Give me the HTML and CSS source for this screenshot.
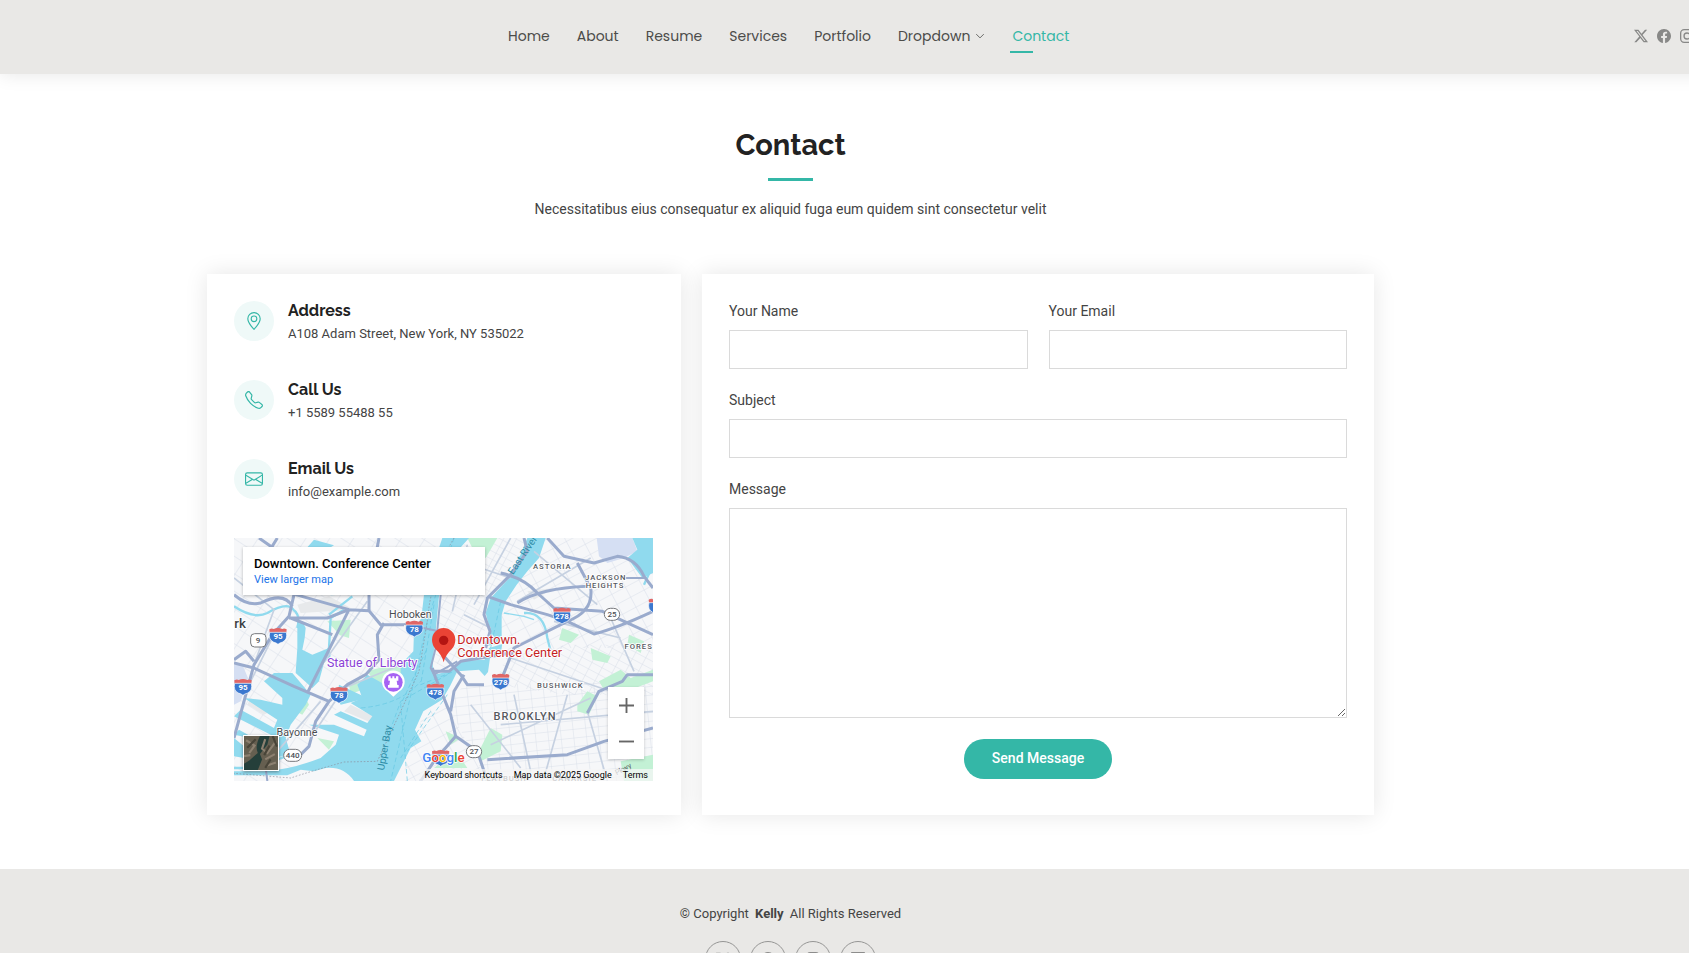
FILE: index.html
```html
<!DOCTYPE html>
<html lang="en">
<head>
<meta charset="utf-8">
<title>Contact - Kelly</title>
<link rel="stylesheet" href="styles.css">
</head>
<body>
<svg class="sprite" aria-hidden="true">
  <symbol id="x" viewBox="0 0 16 16"><path d="M12.6.75h2.454l-5.36 6.142L16 15.25h-4.937l-3.867-5.07-4.425 5.07H.316l5.733-6.57L0 .75h5.063l3.495 4.633L12.601.75Zm-.86 13.028h1.36L4.323 2.145H2.865z"/></symbol>
  <symbol id="facebook" viewBox="0 0 16 16"><path d="M16 8.049c0-4.446-3.582-8.05-8-8.05C3.58 0-.002 3.603-.002 8.05c0 4.017 2.926 7.347 6.75 7.951v-5.625h-2.03V8.05H6.75V6.275c0-2.017 1.195-3.131 3.022-3.131.876 0 1.791.157 1.791.157v1.98h-1.009c-.993 0-1.303.621-1.303 1.258v1.51h2.218l-.354 2.326H9.25V16c3.824-.604 6.75-3.934 6.75-7.951"/></symbol>
  <symbol id="instagram" viewBox="0 0 16 16"><rect x=".75" y=".75" width="14.5" height="14.5" rx="4" fill="none" stroke="currentColor" stroke-width="1.5"/><circle cx="8" cy="8" r="3.4" fill="none" stroke="currentColor" stroke-width="1.5"/><circle cx="12.3" cy="3.7" r="1"/></symbol>
  <symbol id="linkedin" viewBox="0 0 16 16"><path d="M0 1.146C0 .513.526 0 1.175 0h13.65C15.474 0 16 .513 16 1.146v13.708c0 .633-.526 1.146-1.175 1.146H1.175C.526 16 0 15.487 0 14.854zm4.943 12.248V6.169H2.542v7.225zm-1.2-8.212c.837 0 1.358-.554 1.358-1.248-.015-.709-.52-1.248-1.342-1.248S2.4 3.226 2.4 3.934c0 .694.521 1.248 1.327 1.248zm4.908 8.212V9.359c0-.216.016-.432.08-.586.173-.431.568-.878 1.232-.878.869 0 1.216.662 1.216 1.634v3.865h2.401V9.25c0-2.22-1.184-3.252-2.764-3.252-1.274 0-1.845.7-2.165 1.193v.025h-.016l.016-.025V6.169h-2.4c.03.678 0 7.225 0 7.225z"/></symbol>
</svg>

<header class="header">
  <nav class="nav">
    <a href="#">Home</a>
    <a href="#">About</a>
    <a href="#">Resume</a>
    <a href="#">Services</a>
    <a href="#">Portfolio</a>
    <a href="#">Dropdown <svg class="chevron" viewBox="0 0 16 16"><path d="M2 5l6 6 6-6" fill="none" stroke="currentColor" stroke-width="1.3"/></svg></a>
    <a href="#" class="active">Contact</a>
  </nav>
  <div class="social">
    <a href="#" aria-label="X"><svg><use href="#x"/></svg></a>
    <a href="#" aria-label="Facebook"><svg><use href="#facebook"/></svg></a>
    <a href="#" aria-label="Instagram"><svg><use href="#instagram"/></svg></a>
    <a href="#" aria-label="LinkedIn"><svg><use href="#linkedin"/></svg></a>
  </div>
</header>

<main class="main">
  <div class="title">
    <h1>Contact</h1>
    <p>Necessitatibus eius consequatur ex aliquid fuga eum quidem sint consectetur velit</p>
  </div>

  <div class="columns">
    <section class="card info">
      <div class="item">
        <span class="badge"><svg viewBox="0 0 16 16"><path d="M12.166 8.94c-.524 1.062-1.234 2.12-1.96 3.07A32 32 0 0 1 8 14.58a32 32 0 0 1-2.206-2.57c-.726-.95-1.436-2.008-1.96-3.07C3.304 7.867 3 6.862 3 6a5 5 0 0 1 10 0c0 .862-.305 1.867-.834 2.94M8 16s6-5.686 6-10A6 6 0 0 0 2 6c0 4.314 6 10 6 10"/><path d="M8 8a2 2 0 1 1 0-4 2 2 0 0 1 0 4m0 1a3 3 0 1 0 0-6 3 3 0 0 0 0 6"/></svg></span>
        <div><h2>Address</h2><p>A108 Adam Street, New York, NY 535022</p></div>
      </div>
      <div class="item">
        <span class="badge"><svg viewBox="0 0 16 16"><path d="M3.654 1.328a.678.678 0 0 0-1.015-.063L1.605 2.3c-.483.484-.661 1.169-.45 1.77a17.6 17.6 0 0 0 4.168 6.608 17.6 17.6 0 0 0 6.608 4.168c.601.211 1.286.033 1.77-.45l1.034-1.034a.678.678 0 0 0-.063-1.015l-2.307-1.794a.68.68 0 0 0-.58-.122l-2.19.547a1.75 1.75 0 0 1-1.657-.459L5.482 8.062a1.75 1.75 0 0 1-.46-1.657l.548-2.19a.68.68 0 0 0-.122-.58zM1.884.511a1.745 1.745 0 0 1 2.612.163L6.29 2.98c.329.423.445.974.315 1.494l-.547 2.19a.68.68 0 0 0 .178.643l2.457 2.457a.68.68 0 0 0 .644.178l2.189-.547a1.75 1.75 0 0 1 1.494.315l2.306 1.794c.829.645.905 1.87.163 2.611l-1.034 1.034c-.74.74-1.846 1.065-2.877.702a18.6 18.6 0 0 1-7.01-4.42 18.6 18.6 0 0 1-4.42-7.009c-.362-1.03-.037-2.137.703-2.877z"/></svg></span>
        <div><h2>Call Us</h2><p>+1 5589 55488 55</p></div>
      </div>
      <div class="item">
        <span class="badge"><svg viewBox="0 0 16 16"><path d="M0 4a2 2 0 0 1 2-2h12a2 2 0 0 1 2 2v8a2 2 0 0 1-2 2H2a2 2 0 0 1-2-2zm2-1a1 1 0 0 0-1 1v.217l7 4.2 7-4.2V4a1 1 0 0 0-1-1zm13 2.383-4.708 2.825L15 11.105zm-.034 6.876-5.64-3.471L8 9.583l-1.326-.795-5.64 3.47A1 1 0 0 0 2 13h12a1 1 0 0 0 .966-.741M1 11.105l4.708-2.897L1 5.383z"/></svg></span>
        <div><h2>Email Us</h2><p>info@example.com</p></div>
      </div>

      <div class="map">
        <svg class="canvas" viewBox="0 0 1257 729" preserveAspectRatio="xMidYMid slice">
          <defs>
            <pattern id="g1" width="34" height="22" patternUnits="userSpaceOnUse" patternTransform="rotate(28)"><path d="M0 0H34M0 0V22" class="street"/></pattern>
            <pattern id="g2" width="38" height="26" patternUnits="userSpaceOnUse" patternTransform="rotate(-6)"><path d="M0 0H38M0 0V26" class="street"/></pattern>
            <pattern id="g3" width="46" height="34" patternUnits="userSpaceOnUse" patternTransform="rotate(-28)"><path d="M0 0H46M0 0V34" class="street"/></pattern>
            <pattern id="g4" width="60" height="44" patternUnits="userSpaceOnUse" patternTransform="rotate(33)"><path d="M0 0H60M0 0V44" class="street"/></pattern>
            <g id="shield"><path d="M-26-20Q-18-25-13-21Q0-27 13-21Q18-25 26-20L25-10H-25Z" fill="#e06666"/><path d="M-25-11H25Q30 10 14 18Q4 21 0 25Q-4 21-14 18Q-30 10-25-11Z" fill="#3b78cf" stroke="#fff" stroke-width="2"/></g>
          </defs>
          <rect width="1257" height="729" fill="#f6f7f9"/>
          <path d="M0 0H620L540 400L340 470L150 729H0Z" fill="url(#g4)"/>
          <path d="M700 0H880L760 200L750 300L640 400L600 370L620 160Z" fill="url(#g1)"/>
          <path d="M930 0H1257V330H1000L800 380L770 180Z" fill="url(#g3)"/>
          <path d="M1000 320H1257V470H1000L780 440L820 350Z" fill="url(#g1)"/>
          <path d="M690 440L1257 430V729H760L640 500Z" fill="url(#g2)"/>
          <path d="M570 520L640 500L760 729H500Z" fill="url(#g3)"/>

          <g fill="#c3f1d5">
            <path d="M400 400L490 375L520 400L480 450L420 430Z"/><path d="M280 250L350 245L345 300L318 292Z"/><path d="M700 0H790L755 60L715 30Z"/>
            <path d="M770 570L805 590L800 640L740 670L735 640Z"/><path d="M1030 500L1060 460L1090 475L1065 530L1030 520Z"/><path d="M1095 430L1160 395L1190 420L1257 395V430L1190 455H1110Z"/>
            <path d="M190 490L215 480L225 500L205 530L185 520Z"/><path d="M550 490L590 465L625 475L590 500Z"/><path d="M985 270L1035 290L1010 315L975 305Z"/><path d="M1070 330L1130 355L1120 375L1075 365Z"/><path d="M1185 290L1230 310L1220 345L1180 320Z"/><path d="M345 440L375 425L385 455L350 468Z"/><path d="M250 600L300 610L285 635Z"/><path d="M635 580L680 600L650 620Z"/><path d="M625 670L680 660L700 690H600Z"/><path d="M1160 670L1257 650V729H1170Z"/>
          </g>
          <path d="M1088 0H1195L1210 40L1170 60L1120 75L1095 55Z" fill="#d5dff3"/><path d="M0 380H25L42 420L20 490L0 500Z" fill="#d5dff3"/>
          <path d="M190 200L285 175L360 215L200 225ZM50 480L110 520L90 530L40 500ZM880 160L960 150L900 185ZM350 500L470 560L450 570L330 520Z" fill="#e7e9eb"/>

          <g fill="#90daee">
            <path d="M625 0H705L665 45Q632 110 615 175L603 300L596 380L600 410L645 400L680 368L752 365L765 330L805 318L800 345L768 360L762 402L752 414L735 395L670 400L648 445L624 485L568 520L543 575L562 610L530 630L480 729H360Q330 685 275 690L240 700L200 695L160 712H0V700L90 700Q170 695 260 660L305 620L315 590L225 560L300 560L390 595L398 575L300 530L320 520L400 555L415 535L350 495L385 480L370 440L400 410L480 455L500 450V380L538 340L540 280L562 240L570 170L598 80Z"/>
            <path d="M880 0H935L915 60L880 100L848 140L815 190L803 230L803 295L785 318L755 325L768 275L755 225L770 180L835 110Z"/>
            <path d="M1195 0H1257V105L1225 120L1180 60L1210 35Z"/>
            <path d="M175 405L230 470L215 500L170 560L155 600L170 650L60 670L50 600L0 590L15 575L95 620L110 590L0 535L20 515L120 570L130 545L30 480L80 485L145 500L145 480L90 430L120 405Z"/>
            <path d="M190 260L205 250L215 270L212 300L205 335L235 350L285 330L290 355L270 375L255 430L235 450L185 405L190 330Z"/>
            <path d="M315 440L400 480L320 500L310 480Z"/><path d="M0 600L30 625V660L0 655Z"/><path d="M255 60L320 170L290 172L240 70Z"/><path d="M240 5L300 22L290 28H220Z"/>
          </g>
          <g fill="none" stroke="#90daee" stroke-width="7"><path d="M0 205Q60 245 100 225Q160 190 178 215Q200 230 190 270M285 230L355 175M220 430L285 330L290 240L330 215M170 650L60 690H0M870 225Q930 220 940 300L950 340M1257 80L1230 140"/><path d="M810 225L870 235L900 245" stroke-width="4"/></g>
          <g fill="none" stroke="#64c7e3" stroke-width="2" stroke-dasharray="14 8"><path d="M660 0L580 250L540 430L470 729M380 510Q500 500 560 430M640 410L500 490L460 600M520 729L500 500L580 330M600 200L560 440L660 400M590 520L500 660M800 190L770 330M640 470L520 640"/></g>
          <g fill="none" stroke="#8b8d9b" stroke-width="2" stroke-dasharray="5 5"><path d="M660 0Q590 120 580 250L555 400L500 520L430 670L330 672Q230 700 170 720L0 706"/></g>

          <g fill="none" stroke="#c6d1e1" stroke-width="5"><path d="M0 120L120 215L60 380M40 450L120 290M250 400L400 190M230 600L330 450L500 380M130 640L260 490M700 20L655 220M830 0L720 200M740 90L830 120M690 230L770 270M850 190L1070 60M900 40L1090 200M960 250L1160 300M830 360L1130 460M710 500L860 690M840 470L890 700M770 620L1070 480M800 560L1257 520M930 720L1000 470M1060 520L1120 729M1130 240L1200 400"/></g>

          <g class="road"><path d="M0 170Q40 205 80 195Q150 160 175 205M180 170L165 235L115 290L60 380L0 600M60 370L35 340L0 365M0 375L60 390L180 445L285 490M165 240H280L345 215L405 218L440 260H510M405 218V160L435 0M345 215L220 465M285 490L340 440L395 410L435 365L430 290L450 255M285 490L245 550L225 625L200 650M170 240L295 290M185 170L345 215M75 0L160 60M130 0L50 130"/>
            <path d="M870 0L880 40L830 110L760 180L750 230L768 280L755 330M760 175L830 200L940 230L1000 250L1080 288Q1150 270 1257 220M800 105Q870 120 910 165L960 210L1105 220L1257 290M850 195Q920 150 1060 145M940 0L990 55L1080 75L1150 55Q1205 60 1230 115L1257 150M1030 75L1070 150Q1080 220 1000 250L900 300L840 330L800 430M750 440H700L680 410L630 355M600 400H645L680 370L830 345M1060 525L1095 460L1165 430L1180 410H1257M595 390L605 420L650 530L665 595L730 640L760 729M650 520L660 460L690 410M665 595L600 670L560 729M760 665L1000 650L1110 610L1257 570"/></g>
          <path d="M620 170L605 330L590 390L600 410L670 370" class="road thin"/>
          <path d="M510 258L640 285M100 729L95 690M1175 120H1235" class="road thin"/>

          <g class="shields">
            <use href="#shield" x="541" y="272"/><text x="541" y="281">78</text>
            <use href="#shield" x="132" y="294"/><text x="132" y="303">95</text>
            <use href="#shield" x="27" y="447"/><text x="27" y="456">95</text>
            <use href="#shield" x="315" y="471"/><text x="315" y="480">78</text>
            <use href="#shield" x="604" y="461"/><text x="604" y="470">478</text>
            <use href="#shield" x="984" y="233"/><text x="984" y="242">278</text>
            <use href="#shield" x="800" y="431"/><text x="800" y="440">278</text>
            <use href="#shield" x="1270" y="205"/>
            <use href="#shield" x="620" y="660"/>
          </g>
          <g class="routes"><rect x="50" y="287" width="46" height="40" rx="12"/><text x="72" y="316">9</text><rect x="1111" y="211" width="46" height="36" rx="18"/><text x="1134" y="237">25</text><rect x="149" y="634" width="54" height="36" rx="18"/><text x="176" y="660">440</text><rect x="697" y="623" width="46" height="36" rx="18"/><text x="720" y="649">27</text></g>

          <g class="town"><text x="529" y="239" text-anchor="middle">Hoboken</text><text x="189" y="595" text-anchor="middle">Bayonne</text></g>
          <text x="1" y="269" class="city">rk</text>
          <g class="area"><text x="955" y="94">ASTORIA</text><text x="1115" y="126">JACKSON</text><text x="1113" y="150">HEIGHTS</text><text x="979" y="449">BUSHWICK</text><text x="1214" y="333">FORES</text><text x="873" y="545" class="big">BROOKLYN</text><text x="810" y="728">FLATBUSH</text><text x="1022" y="728">CANARSIE</text></g>
          <g class="water"><text transform="translate(837 112) rotate(-56)">East River</text><text transform="translate(450 698) rotate(-80)">Upper Bay</text></g>
          <text x="1148" y="712" transform="rotate(-28 1148 712)" class="pkwy">Pkwy</text>
          <text x="279" y="388" class="liberty">Statue of Liberty</text>
          <path d="M478 476L460 460A34 34 0 1 1 496 460Z" fill="#fff"/><circle cx="478" cy="433" r="28" fill="#a663f3"/>
          <path d="M463 415h7v6h5v-6h6v6h5v-6h7v13h-5l2 13h4v8h-32v-8h4l2-13h-5z" fill="#fff"/>
          <g class="place"><text x="670" y="318">Downtown.</text><text x="670" y="356">Conference Center</text></g>
          <path d="M629 373Q623 350 605 334Q594 321 594 305A35 35 0 0 1 664 305Q664 321 653 334Q635 350 629 373Z" fill="#ea4335"/><circle cx="629" cy="307" r="14" fill="#b31412"/>
          <text x="565" y="672" class="google"><tspan fill="#4285f4">G</tspan><tspan fill="#ea4335">o</tspan><tspan fill="#fbbc04">o</tspan><tspan fill="#4285f4">g</tspan><tspan fill="#34a853">l</tspan><tspan fill="#ea4335">e</tspan></text>
        </svg>
        <div class="place-card"><strong>Downtown. Conference Center</strong><a href="#">View larger map</a></div>
        <button class="satellite" type="button" aria-label="Show satellite imagery"><svg viewBox="0 0 32 32"><rect width="32" height="32" fill="#665f50"/><path d="M15 0Q10 10 13 16L5 23L0 26V32H13L17 22L15 17L22 8L24 0Z" fill="#253f3a"/><path d="M20 3L17 12L22 16L30 5M2 4L10 9L5 16M20 22L29 17M21 28L30 25M0 19L6 18" fill="none" stroke="#8d8070" stroke-width="2"/><path d="M24 9L19 18M3 11L11 3M25 22L20 30M27 0L31 10" fill="none" stroke="#484438" stroke-width="2"/></svg></button>
        <div class="zoom"><button type="button" aria-label="Zoom in"><svg viewBox="0 0 16 16"><path d="M8 0V16M0 8H16"/></svg></button><button type="button" aria-label="Zoom out"><svg viewBox="0 0 16 16"><path d="M0 8H16"/></svg></button></div>
        <div class="legal"><a href="#">Keyboard shortcuts</a><span>Map data ©2025 Google</span><a href="#">Terms</a></div>
      </div>
    </section>

    <form class="card form">
      <div class="field"><label for="name">Your Name</label><input id="name" type="text"></div>
      <div class="field"><label for="email">Your Email</label><input id="email" type="email"></div>
      <div class="field wide"><label for="subject">Subject</label><input id="subject" type="text"></div>
      <div class="field wide"><label for="message">Message</label><textarea id="message"></textarea></div>
      <button class="send" type="submit">Send Message</button>
    </form>
  </div>
</main>

<footer class="footer">
  <p>© Copyright <strong>Kelly</strong> All Rights Reserved</p>
  <div class="rings">
    <a href="#" aria-label="X"><svg><use href="#x"/></svg></a>
    <a href="#" aria-label="Facebook"><svg><use href="#facebook"/></svg></a>
    <a href="#" aria-label="Instagram"><svg><use href="#instagram"/></svg></a>
    <a href="#" aria-label="LinkedIn"><svg><use href="#linkedin"/></svg></a>
  </div>
</footer>
</body>
</html>
```
FILE: styles.css
```css
* { box-sizing: border-box; }
body { margin: 0; overflow-x: hidden; background: #fff; color: #444; font: 14px/21px Roboto, sans-serif; }
h1, h2, p { margin: 0; }
a { color: inherit; text-decoration: none; }
svg { fill: currentColor; display: block; }
.sprite { display: none; }

.header { display: flex; align-items: center; justify-content: space-between; height: 74px; margin-right: -28px; padding: 0 0 2px 508px; background: #e9e8e6; box-shadow: 0 0 18px rgba(0, 0, 0, .1); }
.nav { display: flex; gap: 27px; font: 14px/34px Poppins, sans-serif; color: #4c4c4a; }
.nav a { display: flex; align-items: center; gap: 5px; position: relative; }
.nav .active { color: #34b7a7; }
.nav .active::after { content: ""; position: absolute; left: -2px; bottom: 0; width: 23px; height: 2px; background: #34b7a7; }
.chevron { width: 10px; height: 10px; }
.social { display: flex; gap: 9px; color: #888887; }
.social svg { width: 14px; height: 14px; }

.main { padding: 54px 315px 54px 207px; }
.title { display: flex; flex-direction: column; align-items: center; padding-bottom: 52px; }
.title h1 { color: #222; font: 700 29px/34px Raleway, sans-serif; padding-bottom: 16px; }
.title h1::after { content: ""; display: block; width: 45px; height: 3px; margin: 16px auto 0; background: #34b7a7; }
.title p { line-height: 25px; }

.columns { display: grid; grid-template-columns: 474fr 672fr; gap: 21px; }
.card { padding: 27px 27px 34px; background: #fff; box-shadow: 0 0 22px rgba(0, 0, 0, .1); }
.info { padding-right: 28px; }
.item { display: flex; gap: 14px; height: 40px; margin-bottom: 39px; }
.badge { display: grid; place-items: center; width: 40px; height: 40px; border-radius: 50%; background: #eff9f8; color: #34b7a7; }
.badge svg { width: 18px; height: 18px; }
.item h2 { color: #222; font: 700 16px/19px Raleway, sans-serif; margin-bottom: 4px; }
.item p { font-size: 13px; line-height: 20px; }

.map { position: relative; height: 243px; overflow: hidden; }
.canvas { width: 100%; height: 100%; font-family: Roboto, sans-serif; }
.street { fill: none; stroke: #d9dfe9; stroke-width: 3; }
.road { fill: none; stroke: #9aabcd; stroke-width: 9; stroke-linejoin: round; }
.thin { stroke-width: 6; }
.shields text { fill: #fff; font-size: 24px; font-weight: 700; text-anchor: middle; }
.routes rect { fill: #fff; stroke: #77797d; stroke-width: 3; }
.routes text { fill: #4b4f55; font-size: 24px; font-weight: 500; text-anchor: middle; }
.town, .city, .area, .water, .liberty, .place { paint-order: stroke; stroke: #fff; stroke-width: 5px; }
.town { fill: #4a4d52; font-size: 32px; }
.city { fill: #3c3f43; font-size: 40px; font-weight: 500; }
.area { fill: #55585e; font-size: 23px; font-weight: 500; text-anchor: middle; letter-spacing: 3px; }
.big { font-size: 33px; }
.water { fill: #2c8ba5; stroke: none; font-size: 30px; }
.pkwy { fill: #55585e; font-size: 22px; }
.liberty { fill: #8b43d6; font-size: 37px; }
.place { fill: #c5221f; font-size: 38px; }
.google { paint-order: stroke; stroke: #fff; stroke-width: 4px; font-size: 40px; font-weight: 500; }
.place-card { position: absolute; left: 9px; top: 9px; width: 242px; height: 48px; padding: 9px 11px; display: flex; flex-direction: column; background: #fff; box-shadow: 0 1px 3px rgba(0, 0, 0, .25); line-height: 16px; }
.place-card strong { color: #000; font-size: 13px; font-weight: 500; }
.place-card a { color: #1a73e8; font-size: 11px; }
.satellite { position: absolute; left: 9px; bottom: 10px; width: 36px; height: 36px; padding: 0; border: 1px solid #fff; background: none; box-shadow: 0 1px 3px rgba(0, 0, 0, .4); }
.satellite svg { width: 100%; height: 100%; }
.zoom { position: absolute; right: 9px; top: 149px; width: 36px; display: grid; background: #fff; box-shadow: 0 1px 3px rgba(0, 0, 0, .2); }
.zoom button { display: grid; place-items: center; height: 36px; padding: 0; border: 0; background: none; color: #666; }
.zoom svg { width: 15px; height: 15px; stroke: currentColor; stroke-width: 2; }
.legal { position: absolute; right: 0; bottom: 0; display: flex; gap: 11px; padding: 0 5px; background: rgba(245, 245, 245, .75); color: #000; font-size: 9px; line-height: 12px; }

.form { display: grid; grid-template-columns: 1fr 1fr; gap: 21px; align-content: start; }
.field { display: flex; flex-direction: column; }
.field label { line-height: 21px; padding-bottom: 8px; }
.wide, .send { grid-column: 1 / -1; }
.field input, .field textarea { width: 100%; height: 39px; margin: 0; padding: 9px 14px; border: 1px solid #dadada; background: #fff; font: inherit; outline: 0; }
.field textarea { height: 210px; resize: vertical; }
.send { justify-self: center; height: 40px; padding: 0 28px 2px; border: 0; border-radius: 20px; background: #34b7a7; color: #fff; font: 500 14px/20px Roboto, sans-serif; }

.footer { display: flex; flex-direction: column; align-items: center; gap: 17px; padding: 34px 108px 36px 0; background: #e9e8e6; font-size: 13px; line-height: 21px; }
.footer strong { margin: 0 3px; }
.rings { display: flex; gap: 9px; color: #8d8d8c; }
.rings a { display: grid; place-items: center; width: 36px; height: 36px; border: 1px solid #969695; border-radius: 50%; }
.rings svg { width: 14px; height: 14px; }
```
